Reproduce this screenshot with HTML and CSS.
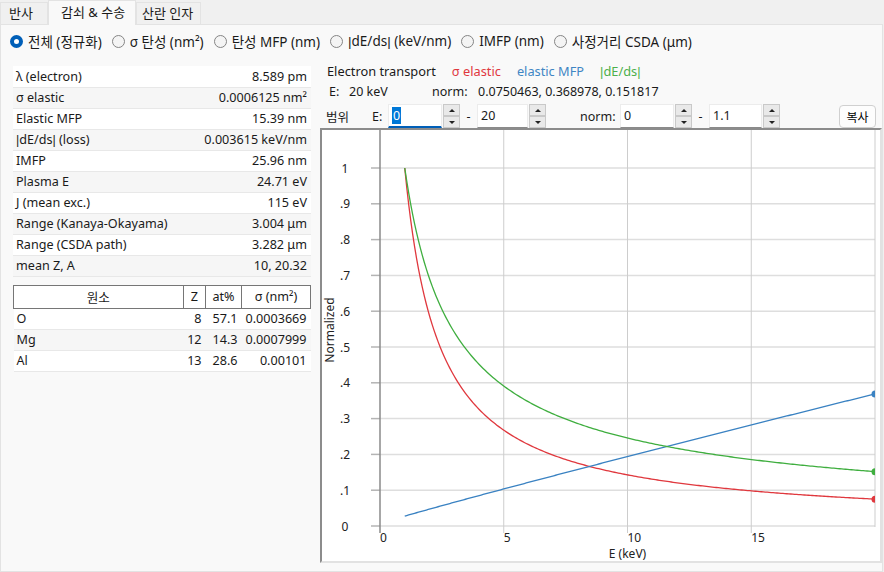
FILE: index.html
```html
<!DOCTYPE html>
<html lang="ko">
<head>
    <meta charset="UTF-8">
    <title>Electron transport</title>
    <link rel="stylesheet" href="styles.css">
</head>
<body>
    <div id="tabs">
        <span class="tab t1">반사</span>
        <span class="tab t2 active">감쇠 &amp; 수송</span>
        <span class="tab t3">산란 인자</span>
    </div>
    <div id="panel">
        <div id="modes">
            <label class="radio checked"><i></i><span>전체 (정규화)</span></label>
            <label class="radio"><i></i><span>σ 탄성 (nm²)</span></label>
            <label class="radio"><i></i><span>탄성 MFP (nm)</span></label>
            <label class="radio"><i></i><span><span class="bar">|</span>dE/ds<span class="bar">|</span> (keV/nm)</span></label>
            <label class="radio"><i></i><span>IMFP (nm)</span></label>
            <label class="radio"><i></i><span>사정거리 CSDA (μm)</span></label>
        </div>

        <div id="content">
            <div id="left">
                <table class="props">
                    <tr><td>λ (electron)</td><td>8.589 pm</td></tr>
                    <tr><td>σ elastic</td><td>0.0006125 nm²</td></tr>
                    <tr><td>Elastic MFP</td><td>15.39 nm</td></tr>
                    <tr><td><span class="bar">|</span>dE/ds<span class="bar">|</span> (loss)</td><td>0.003615 keV/nm</td></tr>
                    <tr><td>IMFP</td><td>25.96 nm</td></tr>
                    <tr><td>Plasma E</td><td>24.71 eV</td></tr>
                    <tr><td>J (mean exc.)</td><td>115 eV</td></tr>
                    <tr><td>Range (Kanaya-Okayama)</td><td>3.004 μm</td></tr>
                    <tr><td>Range (CSDA path)</td><td>3.282 μm</td></tr>
                    <tr><td>mean Z, A</td><td>10, 20.32</td></tr>
                </table>

                <table class="elems">
                    <tr><th class="c-name">원소</th><th class="c-z">Z</th><th class="c-at">at%</th><th class="c-s">σ (nm²)</th></tr>
                    <tr><td>O</td><td>8</td><td>57.1</td><td>0.0003669</td></tr>
                    <tr><td>Mg</td><td>12</td><td>14.3</td><td>0.0007999</td></tr>
                    <tr><td>Al</td><td>13</td><td>28.6</td><td>0.00101</td></tr>
                </table>
            </div>

            <div id="right">
                <div class="line legend">
                    <span>Electron transport</span>
                    <span class="red">σ elastic</span>
                    <span class="blue">elastic MFP</span>
                    <span class="green"><span class="bar">|</span>dE/ds<span class="bar">|</span></span>
                </div>
                <div class="line info">
                    <span class="e-lbl">E:</span><span class="e-val">20 keV</span>
                    <span class="n-lbl">norm:</span><span>0.0750463, 0.368978, 0.151817</span>
                </div>
                <div class="line range">
                    <span class="r-title">범위</span>
                    <span class="r-e">E:</span>
                    <span class="num focus w54"><b>0</b></span><span class="spin"><i class="up"></i><i class="dn"></i></span>
                    <span class="dash">-</span>
                    <span class="num w51">20</span><span class="spin"><i class="up"></i><i class="dn"></i></span>
                    <span class="r-norm">norm:</span>
                    <span class="num w54">0</span><span class="spin"><i class="up"></i><i class="dn"></i></span>
                    <span class="dash">-</span>
                    <span class="num w53">1.1</span><span class="spin"><i class="up"></i><i class="dn"></i></span>
                    <button class="copy">복사</button>
                </div>

                <div id="chart">
                    <svg width="558" height="431" viewBox="322 130 558 431">
                        <defs>
                            <clipPath id="plotclip"><rect x="322" y="130" width="553" height="431"/></clipPath>
                        </defs>
                        <g id="hgrid"></g>
                        <g class="vgrid">
                            <line x1="503.75" y1="130" x2="503.75" y2="533"/>
                            <line x1="627.5" y1="130" x2="627.5" y2="533"/>
                            <line x1="751.25" y1="130" x2="751.25" y2="533"/>
                            <line x1="875" y1="130" x2="875" y2="527"/>
                        </g>
                        <line class="yaxis" x1="380" y1="130" x2="380" y2="533"/>
                        <g id="ylabels" class="tick"></g>
                        <g class="tick">
                            <text x="380" y="542">0</text>
                            <text x="503.75" y="542">5</text>
                            <text x="627.5" y="542">10</text>
                            <text x="751.25" y="542">15</text>
                            <text x="627.5" y="557.5" text-anchor="middle">E (keV)</text>
                            <text x="0" y="0" text-anchor="middle" transform="translate(334 330) rotate(-90)">Normalized</text>
                        </g>
                        <g clip-path="url(#plotclip)">
                            <path id="c-red" class="curve red"/>
                            <path id="c-blue" class="curve blue"/>
                            <path id="c-green" class="curve green"/>
                            <circle id="d-red" class="dot red" cx="875" r="3.5"/>
                            <circle id="d-blue" class="dot blue" cx="875" r="3.5"/>
                            <circle id="d-green" class="dot green" cx="875" r="3.5"/>
                        </g>
                    </svg>
                </div>
            </div>
        </div>
    </div>

    <script src="script.js"></script>
</body>
</html>
```

FILE: styles.css
```css
*{
    padding: 0;
    margin: 0;
    box-sizing: border-box;
}

body{
    width: 884px;
    height: 572px;
    overflow: hidden;
    background: #f0f0f0;
    font-family: "Noto Sans", "Noto Sans CJK KR", sans-serif;
    font-size: 12px;
    color: #1a1a1a;
}

/* the narrow bar glyph of the original UI font */
.bar{
    font-family: "Liberation Sans", sans-serif;
}

#tabs{
    height: 24px;
    display: flex;
    align-items: flex-end;
}

.tab{
    height: 22px;
    line-height: 20px;
    font-size: 13px;
    border: 1px solid #e3e3e3;
    border-bottom: none;
    background: #f0f0f0;
    white-space: nowrap;
}

.t1{ width: 48px; padding-left: 8px; }
.t2{ width: 88px; padding-left: 12px; }
.t3{ width: 65px; padding-left: 5px; }

.tab.active{
    height: 25px;
    margin-bottom: -1px;
    background: #f9f9f9;
    line-height: 23px;
    position: relative;
}

#panel{
    width: 883px;
    height: 548px;
    border: 1px solid #e3e3e3;
    background: #f9f9f9;
}

#modes{
    display: flex;
    height: 20px;
    margin-top: 6px;
    padding-left: 9px;
    gap: 10px;
    font-size: 13.5px;
}

.radio{
    display: flex;
    align-items: center;
    gap: 5px;
    white-space: nowrap;
}

.radio i{
    width: 13px;
    height: 13px;
    border-radius: 50%;
    border: 1px solid #858585;
    background: #f4f4f4;
}

.radio.checked i{
    border: 4px solid #005fb8;
    background: #fff;
}

#content{
    display: flex;
    margin-top: 9px;
}

#left{
    width: 298px;
    margin-left: 12px;
    padding-top: 6px;
    font-size: 12.6px;
}

table{
    width: 298px;
    border-collapse: collapse;
}

.props td{
    height: 21px;
    padding: 0 4px 0 3px;
    border-bottom: 1px solid #e8e8e8;
    background: #fff;
    white-space: nowrap;
}

.props tr:nth-child(even) td,
.elems tr:nth-child(odd) td{
    background: #f6f6f6;
}

.props td + td,
.elems td{
    text-align: right;
}

.elems{
    margin-top: 8px;
}

.elems th{
    height: 23px;
    font-weight: normal;
    background: #fff;
    border: 1px solid #767676;
}

.c-name{ width: 174px; }
.c-z{ width: 21px; }
.c-at{ width: 36px; }

.elems td{
    height: 21px;
    padding: 0 4px;
    border-bottom: 1px solid #e8e8e8;
    background: #fff;
}

.elems td:first-child{
    text-align: left;
    padding-left: 3px;
}

#right{
    width: 562px;
    margin-left: 9px;
}

.line{
    display: flex;
    align-items: center;
    height: 21px;
}

.legend{
    padding-left: 7px;
    font-size: 12.8px;
}

.legend > span{
    margin-right: 16px;
}

.red{ color: #e0383e; }
.blue{ color: #3f86c4; }
.green{ color: #4cb04c; }

.info{
    padding-left: 9px;
    font-size: 12.5px;
}

.e-lbl{ width: 20px; }
.e-val{ width: 83px; }
.n-lbl{ width: 46px; }

.range{
    height: 24px;
    margin-top: 2px;
    font-size: 12.5px;
}

.r-title{
    width: 52px;
    padding-left: 6px;
}

.r-e{ width: 16px; }

.num{
    height: 24px;
    line-height: 22px;
    padding-left: 3px;
    background: #fff;
    border: 1px solid #ececec;
    border-bottom-color: #8a8a8a;
}

.num.focus{
    border-bottom: 2px solid #005fb8;
}

.num b{
    font-weight: normal;
    color: #fff;
    background: #0078d7;
    padding: 0 1px;
}

.w54{ width: 54px; }
.w53{ width: 53px; }
.w51{ width: 51px; }

.spin{
    width: 17px;
    height: 24px;
    display: flex;
    flex-direction: column;
    margin-left: 1px;
}

.spin i{
    flex: 1;
    border: 1px solid #c9c9c9;
    background: #e9e9e9;
    position: relative;
}

.spin i::after{
    content: "";
    position: absolute;
    left: 5px;
    top: 4px;
    border-left: 3px solid transparent;
    border-right: 3px solid transparent;
}

.spin .up::after{
    border-bottom: 3px solid #222;
}

.spin .dn::after{
    border-top: 3px solid #222;
}

.dash{
    width: 17px;
    text-align: center;
}

.r-norm{
    width: 40px;
    margin-left: 34px;
}

.copy{
    margin-left: auto;
    margin-right: 6px;
    width: 37px;
    height: 23px;
    font-family: "Noto Sans CJK KR", sans-serif;
    font-size: 12px;
    background: #fdfdfd;
    border: 1px solid #d0d0d0;
    border-radius: 4px;
}

#chart{
    width: 562px;
    height: 435px;
    background: #fff;
    border-style: solid;
    border-width: 2px;
    border-color: #8c8c8c #e2e2e2 #e2e2e2 #8c8c8c;
}

#chart svg{
    display: block;
    font-family: "Noto Sans", sans-serif;
    font-size: 12px;
}

#hgrid line{
    stroke: #dedede;
    stroke-width: 1.5;
}

#hgrid line.t{
    stroke: #b4b4b4;
}

.vgrid line{
    stroke: #cdcdcd;
    stroke-width: 1;
}

.yaxis{
    stroke: #8a8a8a;
    stroke-width: 1.5;
}

.tick text{
    fill: #222;
}

.curve{
    fill: none;
    stroke-width: 1.3;
}

.curve.red{ stroke: #e0383e; }
.curve.blue{ stroke: #3a82c2; }
.curve.green{ stroke: #3fae3f; }

.dot.red{ fill: #e0383e; }
.dot.blue{ fill: #3a82c2; }
.dot.green{ fill: #3fae3f; }
```

FILE: script.js
```js
var X0 = 380, KX = 24.75, Y0 = 526, KY = 358;
var NS = "http://www.w3.org/2000/svg";

function px(e){ return X0 + e * KX; }
function py(v){ return Y0 - v * KY; }

// normalised curves, 1..20 keV
function red(e){ return Math.pow(1.3317 / (e + 0.3317), 0.95); }
function blue(e){ return 0.369 * Math.pow((e + 0.3317) / 20.3317, 0.95); }
function green(e){
    return 0.5 * Math.pow(e, -0.629) + 0.5 * Math.log(4.355 * e) / (e * 1.4715);
}

function draw(id, f){
    var d = "";
    for(var i = 0; i <= 240; i++){
        var e = 1 + 19 * i / 240;
        d += (i ? "L" : "M") + px(e).toFixed(2) + " " + py(f(e)).toFixed(2);
    }
    document.getElementById("c-" + id).setAttribute("d", d);
    document.getElementById("d-" + id).setAttribute("cy", py(f(20)).toFixed(2));
}

var oGrid = document.getElementById("hgrid");
var oLabels = document.getElementById("ylabels");

for(var i = 0; i <= 10; i++){
    var y = py(i / 10);
    var ln = document.createElementNS(NS, "line");
    ln.setAttribute("x1", 380); ln.setAttribute("x2", 875);
    ln.setAttribute("y1", y); ln.setAttribute("y2", y);
    oGrid.appendChild(ln);

    var tk = document.createElementNS(NS, "line");
    tk.setAttribute("class", "t");
    tk.setAttribute("x1", 371); tk.setAttribute("x2", 380);
    tk.setAttribute("y1", y); tk.setAttribute("y2", y);
    oGrid.appendChild(tk);

    var tx = document.createElementNS(NS, "text");
    tx.setAttribute("x", 345);
    tx.setAttribute("y", y + 4.5);
    tx.setAttribute("text-anchor", "middle");
    tx.textContent = i == 10 ? "1" : i == 0 ? "0" : "." + i;
    oLabels.appendChild(tx);
}

draw("red", red);
draw("blue", blue);
draw("green", green);
```
